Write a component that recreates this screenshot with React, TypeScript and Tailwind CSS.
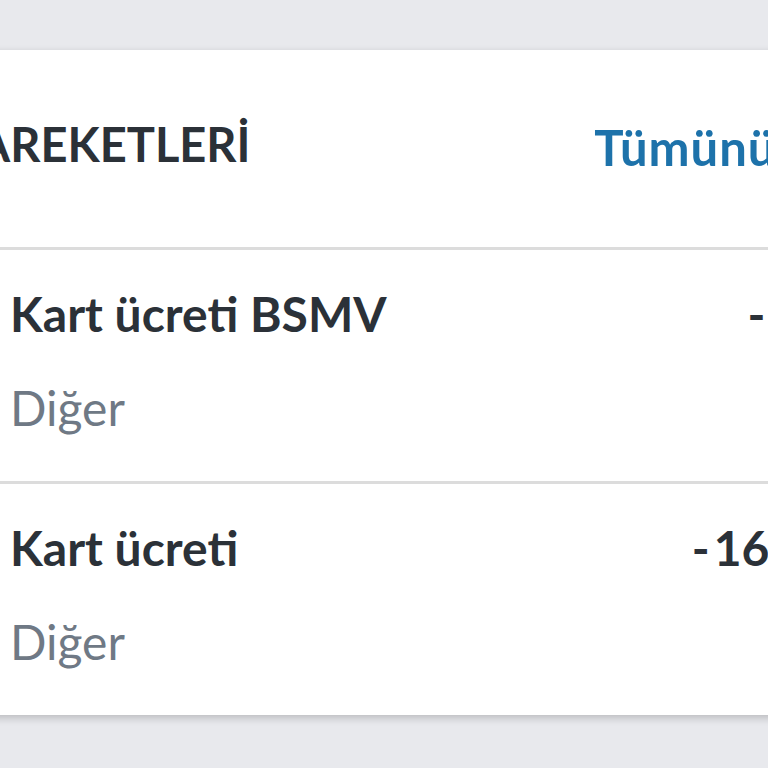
import React from 'react'

type Tx = { title: string; category: string; amount: number }

const rows: Tx[] = [
  { title: 'Kart ücreti BSMV', category: 'Diğer', amount: -8.25 },
  { title: 'Kart ücreti', category: 'Diğer', amount: -165 },
]

const fmt = (n: number) => Math.abs(n).toFixed(2).replace('.', ',') + ' TL'

function Row({ tx }: { tx: Tx }) {
  return (
    <div className="border-t-[3px] border-[#dcdcdc] pl-[20px] pr-[20px] pt-[39px] pb-[48px]">
      <div className="flex items-start justify-between">
        <span className="text-[48px] leading-[50px] font-bold text-[#2b3138]">{tx.title}</span>
        <span className="flex text-[48px] leading-[50px] font-bold text-[#2b3138] whitespace-nowrap">
          <span className="pr-[4px]">{tx.amount < 0 ? '-' : '+'}</span>
          <span>{fmt(tx.amount)}</span>
        </span>
      </div>
      <div className="mt-[44px] text-[48px] leading-[50px] text-[#6f7985]">{tx.category}</div>
    </div>
  )
}

export default function App() {
  return (
    <div className="w-[768px] h-[768px] overflow-hidden bg-[#e8e9ed] pt-[50px]" style={{ fontFamily: 'Lato, "Noto Sans", sans-serif' }}>
      <div className="-ml-[10px] w-[958px] bg-white shadow-[0_3px_8px_rgba(0,0,0,0.2)]">
        <div className="h-[197px] flex items-start pt-[69px]">
          <span className="-ml-[181px] text-[47px] leading-[50px] font-bold text-[#2b3138] whitespace-nowrap">KART HAREKETLERİ</span>
          <span className="ml-auto mr-[74px] mt-[3px] text-[49px] leading-[50px] font-bold tracking-[0.02em] text-[#1d72aa] whitespace-nowrap">Tümünü Gör</span>
        </div>
        {rows.map((tx) => (
          <Row key={tx.title} tx={tx} />
        ))}
      </div>
    </div>
  )
}
